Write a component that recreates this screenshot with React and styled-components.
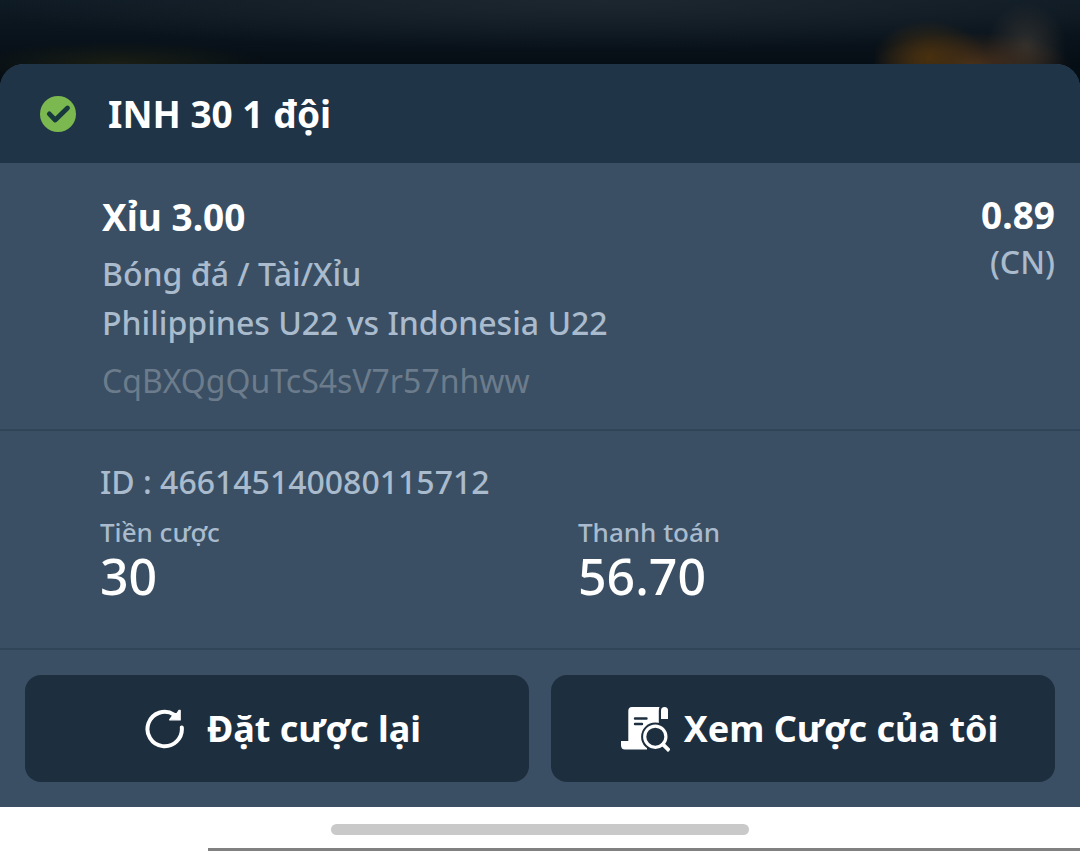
import React from "react";
import styled, { createGlobalStyle } from "styled-components";

const bet = {
  title: "INH 30 1 đội",
  pick: "Xỉu 3.00",
  odds: "0.89",
  oddsType: "(CN)",
  market: "Bóng đá / Tài/Xỉu",
  match: "Philippines U22 vs Indonesia U22",
  code: "CqBXQgQuTcS4sV7r57nhww",
  id: "466145140080115712",
  amounts: [
    { label: "Tiền cược", value: "30" },
    { label: "Thanh toán", value: "56.70" },
  ],
};

function CheckIcon() {
  return (
    <svg width="36" height="36" viewBox="0 0 36 36" aria-hidden="true">
      <circle cx="18" cy="18" r="18" fill="#7bb84f" />
      <path
        d="M9.3 17.9 L15.2 24 L27.5 12"
        fill="none"
        stroke="#17383d"
        strokeWidth="4.8"
        strokeLinecap="round"
        strokeLinejoin="round"
      />
    </svg>
  );
}

function RepeatIcon() {
  return (
    <svg width="40" height="40" viewBox="0 0 40 40" aria-hidden="true">
      <path
        d="M36.8 18.4 A17.2 17.2 0 1 1 29 5.6"
        fill="none"
        stroke="#fff"
        strokeWidth="4"
        strokeLinecap="round"
      />
      <path
        d="M24.6 10.8 L29 4.6 L32 4.4 L34 1.4 L35.2 1.4 L35.2 11 Z"
        fill="#fff"
        stroke="#fff"
        strokeWidth="1.2"
        strokeLinejoin="round"
      />
    </svg>
  );
}

function MyBetsIcon() {
  return (
    <svg width="50" height="46" viewBox="0 0 50 46" aria-hidden="true">
      <path
        d="M12 1 H39.5 Q38.8 2.5 38.8 5 V36 H8.3 V5 Q8.3 1 12 1 Z"
        fill="#fff"
      />
      <path d="M41 13 V4.5 Q41 1 44.5 1 Q48 1 48 4.5 V13 Z" fill="#fff" />
      <path d="M1 35 H27 V43.5 H5 Q1 43.5 1 39 Z" fill="#fff" />
      <path
        d="M15 12.5 H26.5 M15 18 H22"
        stroke="#1d2e3f"
        strokeWidth="2.4"
        strokeLinecap="round"
      />
      <circle cx="35.3" cy="30.7" r="14.2" fill="#1d2e3f" />
      <circle
        cx="35.3"
        cy="30.7"
        r="10.6"
        fill="none"
        stroke="#fff"
        strokeWidth="3.2"
      />
      <path
        d="M43 38.4 L48 43.4"
        stroke="#fff"
        strokeWidth="3.8"
        strokeLinecap="square"
      />
    </svg>
  );
}

function App() {
  return (
    <>
      <GlobalStyle />
      <Screen>
        <Backdrop />
        <Sheet>
          <SheetHeader>
            <CheckIcon />
            <Title>{bet.title}</Title>
          </SheetHeader>
          <BetSection>
            <BetInfo>
              <Pick>{bet.pick}</Pick>
              <Detail>{bet.market}</Detail>
              <Detail>{bet.match}</Detail>
              <Code>{bet.code}</Code>
            </BetInfo>
            <OddsArea>
              <Odds>{bet.odds}</Odds>
              <Detail>{bet.oddsType}</Detail>
            </OddsArea>
          </BetSection>
          <AmountSection>
            <BetId>ID : {bet.id}</BetId>
            <AmountGrid>
              {bet.amounts.map((v) => {
                return (
                  <div key={v.label}>
                    <AmountLabel>{v.label}</AmountLabel>
                    <AmountValue>{v.value}</AmountValue>
                  </div>
                );
              })}
            </AmountGrid>
          </AmountSection>
          <ButtonArea>
            <ActionButton type="button" $gap={22}>
              <RepeatIcon />
              Đặt cược lại
            </ActionButton>
            <ActionButton type="button" $gap={14}>
              <MyBetsIcon />
              Xem Cược của tôi
            </ActionButton>
          </ButtonArea>
        </Sheet>
        <HomeArea>
          <HomeBar />
          <BottomLine />
        </HomeArea>
      </Screen>
    </>
  );
}

const GlobalStyle = createGlobalStyle`
  * {
    box-sizing: border-box;
  }

  body {
    margin: 0;
    background-color: #fff;
    color: #fff;
    font-family: "Noto Sans", sans-serif;
  }
`;

const Screen = styled.main`
  min-height: 100vh;
  display: flex;
  flex-direction: column;
  background-color: #070f16;
`;

const Backdrop = styled.div`
  height: 88px;
  margin-bottom: -24px;
  background:
    radial-gradient(ellipse 56px 38px at 86% 58px, #48300f, transparent),
    radial-gradient(ellipse 100px 32px at 90% 64px, #48301c, transparent),
    radial-gradient(ellipse 40px 44px at 95% 46px, #30302f, transparent),
    radial-gradient(ellipse 150px 22px at 11% 64px, #1a1e14, transparent),
    radial-gradient(ellipse 640px 50px at 56% 0px, #1d272f, transparent),
    linear-gradient(#0e1a24, #060e15 64px);
`;

const Sheet = styled.section`
  border-radius: 24px 24px 0 0;
  overflow: hidden;
  background-color: #3a4f63;
`;

const SheetHeader = styled.header`
  display: flex;
  align-items: center;
  gap: 32px;
  padding: 25px 40px 24px;
  background-color: #1f3447;
`;

const Title = styled.h1`
  margin: 0;
  font-size: 37px;
  line-height: 50px;
  font-weight: bold;
`;

const BetSection = styled.section`
  display: flex;
  justify-content: space-between;
  padding: 30px 25px 24px 102px;
  border-bottom: 2px solid #314558;
`;

const BetInfo = styled.div`
  min-width: 0;
`;

const Pick = styled.h2`
  margin: 0 0 8px;
  font-size: 37px;
  line-height: 48px;
  font-weight: bold;
`;

const Detail = styled.p`
  margin: 0;
  font-size: 32px;
  line-height: 49px;
  font-weight: 500;
  color: #a9bbcd;
`;

const Code = styled(Detail)`
  margin-top: 9px;
  font-weight: 400;
  color: #6c7c8c;
`;

const OddsArea = styled.div`
  text-align: right;
`;

const Odds = styled.p`
  margin: 0;
  font-size: 37px;
  line-height: 44px;
  font-weight: bold;
`;

const AmountSection = styled.section`
  padding: 26px 24px 46px 100px;
  border-bottom: 2px solid #314558;
`;

const BetId = styled(Detail)`
  margin-bottom: 8px;
`;

const AmountGrid = styled.div`
  display: grid;
  grid-template-columns: 1fr 1fr;
`;

const AmountLabel = styled.p`
  margin: 0;
  font-size: 26px;
  line-height: 36px;
  font-weight: 500;
  color: #a9bbcd;
`;

const AmountValue = styled.p`
  margin: 0;
  font-size: 50px;
  line-height: 52px;
  font-weight: 500;
`;

const ButtonArea = styled.div`
  display: grid;
  grid-template-columns: 1fr 1fr;
  gap: 22px;
  padding: 25px;
`;

const ActionButton = styled.button`
  display: flex;
  align-items: center;
  justify-content: center;
  gap: ${(props) => props.$gap}px;
  min-height: 107px;
  padding: 0 0 0 12px;
  border: none;
  border-radius: 16px;
  background-color: #1d2e3f;
  color: #fff;
  font-family: inherit;
  font-size: 36px;
  line-height: 48px;
  font-weight: bold;
  cursor: pointer;
`;

const HomeArea = styled.footer`
  flex: 1;
  display: flex;
  flex-direction: column;
  justify-content: space-between;
  min-height: 44px;
  padding-top: 17px;
  background-color: #fff;
`;

const HomeBar = styled.div`
  width: 39%;
  max-width: 418px;
  height: 11px;
  margin: 0 auto;
  border-radius: 6px;
  background-color: #c9c9c9;
`;

const BottomLine = styled.div`
  height: 3px;
  margin-left: 208px;
  background-color: #808080;
`;

export default App;
